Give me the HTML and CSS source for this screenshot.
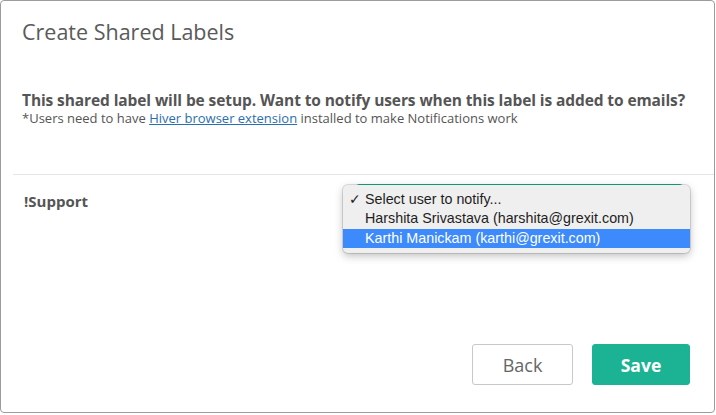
FILE: index.html
```html
<!DOCTYPE html>
<html>
<head>
<meta charset="utf-8">
<link rel="stylesheet" href="styles.css">
</head>
<body>
<div class="dialog">
  <div class="header">
    <h1 class="title">Create Shared Labels</h1>
  </div>
  <div class="intro">
    <p class="question">This shared label will be setup. Want to notify users when this label is added to emails?</p>
    <p class="note">*Users need to have <a href="#" class="link">Hiver browser extension</a> installed to make Notifications work</p>
  </div>
  <div class="row">
    <div class="label-name">!Support</div>
    <div class="select-wrap">
      <div class="select"></div>
      <ul class="menu">
        <li class="item checked"><span class="check">✓</span>Select user to notify...</li>
        <li class="item">Harshita Srivastava (harshita@grexit.com)</li>
        <li class="item active">Karthi Manickam (karthi@grexit.com)</li>
      </ul>
    </div>
  </div>
  <div class="footer">
    <button class="btn btn-back">Back</button>
    <button class="btn btn-save">Save</button>
  </div>
</div>
</body>
</html>
```
FILE: styles.css
```css
html, body {
  margin: 0;
  padding: 0;
  background: #fff;
}
.dialog {
  box-sizing: border-box;
  width: 715px;
  height: 413px;
  border: 1px solid #9c9c9c;
  border-radius: 4px;
  display: flex;
  flex-direction: column;
  font-family: "Open Sans", "DejaVu Sans", sans-serif;
  color: #555;
  background: #fff;
}
.header {
  padding: 16px 21px 0;
}
.title {
  margin: 0;
  font-size: 21.5px;
  font-weight: 400;
  line-height: 30px;
  color: #5a5a5a;
}
.intro {
  margin-left: 12px;
  padding: 44px 0 48px 9px;
  border-bottom: 1px solid #e5e5e5;
}
.question {
  margin: 0;
  font-size: 15.5px;
  font-weight: 700;
  line-height: 19px;
  letter-spacing: -0.1px;
  color: #555;
}
.note {
  margin: 0;
  font-size: 13px;
  line-height: 16px;
  color: #555;
}
.link {
  color: #2a6fb0;
  text-decoration: underline;
}
.row {
  display: flex;
  padding: 9px 0 0 23px;
  height: 80px;
}
.label-name {
  width: 319px;
  padding-top: 2px;
  font-size: 15px;
  font-weight: 700;
  line-height: 30px;
  color: #555;
}
.select-wrap {
  position: relative;
  width: 330px;
  height: 30px;
}
.select {
  box-sizing: border-box;
  margin-left: 12px;
  width: 329px;
  height: 30px;
  border: 1px solid #1cb394;
  border-radius: 4px;
}
.menu {
  position: absolute;
  left: 0;
  top: 1px;
  width: 347px;
  margin: 0;
  padding: 5px 0 5px;
  list-style: none;
  box-sizing: border-box;
  background: #efefef;
  border-radius: 5px;
  box-shadow: 0 0 0 1px rgba(0,0,0,0.12), 0 3px 8px rgba(0,0,0,0.25);
  font-family: "Liberation Sans", Arial, sans-serif;
  font-size: 14.3px;
  color: #1e1e1e;
}
.item {
  position: relative;
  height: 19px;
  line-height: 19px;
  padding-left: 22px;
}
.check {
  position: absolute;
  left: 6px;
  top: 0;
  font-family: "DejaVu Sans", sans-serif;
  font-size: 14px;
}
.item.active {
  margin-top: 1px;
  background: #3d8afd;
  color: #fff;
}
.footer {
  margin-top: auto;
  display: flex;
  justify-content: flex-end;
  gap: 19px;
  padding: 0 24px 27px 0;
}
.btn {
  box-sizing: border-box;
  height: 41px;
  border-radius: 3px;
  font-family: "Open Sans", sans-serif;
  font-size: 18px;
  cursor: pointer;
}
.btn-back {
  width: 101px;
  background: #fff;
  border: 1px solid #c8c8c8;
  color: #666;
}
.btn-save {
  width: 98px;
  background: #1cb394;
  border: 1px solid #1cb394;
  color: #fff;
  font-weight: 700;
  font-size: 17.5px;
}
```
